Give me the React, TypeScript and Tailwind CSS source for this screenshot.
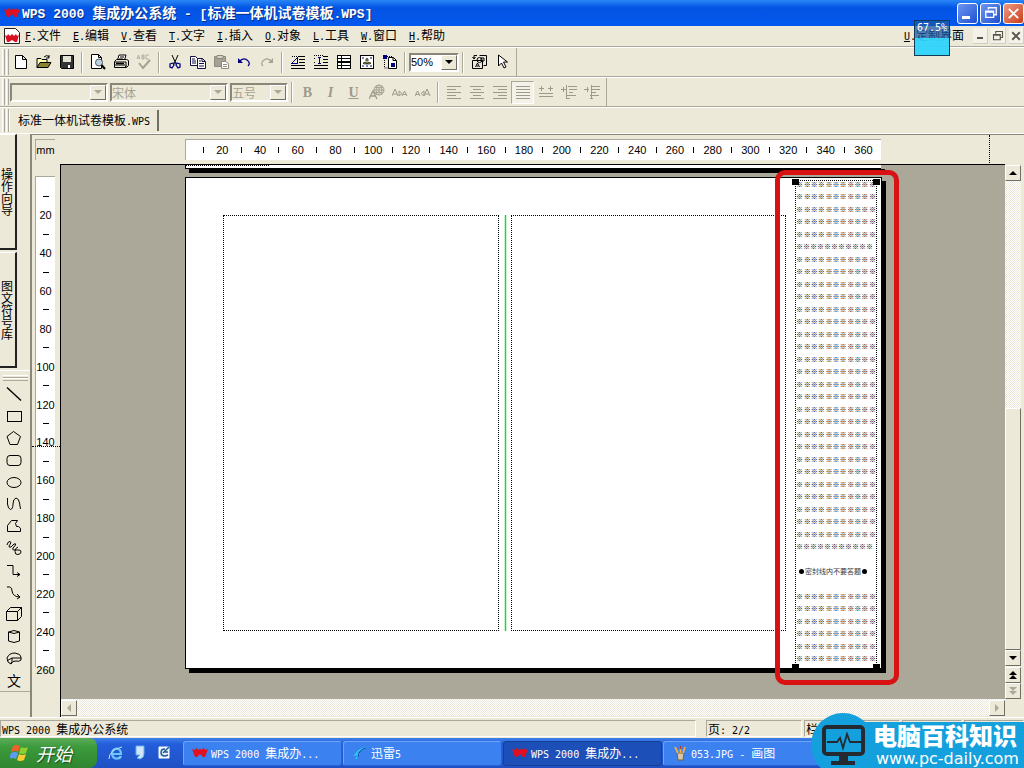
import React from 'react';
import clsx from 'clsx';

const menus = [
  ['F', '文件'],
  ['E', '编辑'],
  ['V', '查看'],
  ['T', '文字'],
  ['I', '插入'],
  ['O', '对象'],
  ['L', '工具'],
  ['W', '窗口'],
  ['H', '帮助'],
];

const horizontalMarks = Array.from({ length: 36 }, (_, i) => (i + 1) * 10);
const verticalMarks = Array.from({ length: 26 }, (_, i) => (i + 1) * 10);

const latin = "whitespace-pre text-[10px] font-['DejaVu_Sans_Mono',monospace]";
const latinLarge = "whitespace-pre text-[13px] font-['Liberation_Mono',monospace]";

// Latin runs are half as wide as the Chinese characters beside them
const Mixed: React.FC<{ text: string; large?: boolean }> = ({ text, large }) => (
  <>
    {text.split(/([\x20-\x7e]+)/).filter(Boolean).map((part, i) =>
      /^[\x20-\x7e]/.test(part) ? (
        <span key={i} className={large ? latinLarge : latin}>
          {part}
        </span>
      ) : (
        part
      )
    )}
  </>
);

const Icon: React.FC<{ children: React.ReactNode; size?: string }> = ({ children, size = 'w-4 h-4' }) => (
  <svg viewBox="0 0 16 16" className={clsx(size, 'shrink-0')} fill="none" stroke="currentColor" aria-hidden="true">
    {children}
  </svg>
);

const WpsMark = ({ size = 'w-4 h-4' }: { size?: string }) => (
  <svg viewBox="0 0 16 16" className={clsx(size, 'shrink-0')} aria-hidden="true">
    <path d="M0 4l3 1 1-2 3 2 1-2 1 2 3-2 1 2 3-1-3 8h-2l-3-3-3 3H3z" fill="#e01020" />
  </svg>
);

const icons: Record<string, React.ReactNode> = {
  新建: <path d="M2.500 1.500h7l4 4v9h-11zM9.500 1.500v4h4" fill="#fff" />,
  打开: (
    <>
      <path d="M1 13.500v-9h4l1 1h5v3" fill="#ffffb0" />
      <path d="M1 13.500l3-5h11l-3 5z" fill="#8a8430" />
      <path d="M8 3q3-3 5 0m0-2v3h-3" />
    </>
  ),
  保存: (
    <>
      <path d="M1.500 1.500h13v13h-12l-1-1z" fill="#333" />
      <path d="M4 2h8v6H4z" fill="#e4e4d4" stroke="none" />
      <path d="M9 11h2v3H9z" fill="#fff" stroke="none" />
    </>
  ),
  打印预览: (
    <>
      <path d="M1.500 .5h7l3 3v11h-10zM8.500 .5v3h3" fill="#fff" />
      <circle cx="9" cy="8.500" r="3.500" fill="#b9d4e4" stroke="#555" />
      <path d="M11.500 11l3.500 4" strokeWidth="2" />
    </>
  ),
  打印: (
    <>
      <path d="M4.500 6l1.500-5h7l-1.500 5" fill="#fff" />
      <path d="M7 3h4M6 5h4M1.500 7.500l2-2h10l2 1v5l-2 2h-12z" />
      <path d="M2 8h11v5M2 11h10M3.500 13.500h8l2-2" />
      <path d="M3 9.500h8" strokeWidth="1.500" />
    </>
  ),
  拼写检查: (
    <g stroke="#a5a293">
      <path d="M1 5l1.500-4L4 5M1.500 4h2M6 1v4h2V1zM6 3h2M13 1h-3v4h3" strokeWidth=".8" />
      <path d="M3 9l4 5 7-8" strokeWidth="2" />
    </g>
  ),
  剪切: (
    <g>
      <path d="M5 1l4 9M11 1L7 10" />
      <path d="M6 9l-3 1v3l2 1 2-3zM10 9l3 1v3l-2 1-2-3z" stroke="#000080" strokeWidth="1.300" />
    </g>
  ),
  复制: (
    <g stroke="#101040">
      <path d="M.5 2.500h5l2 2v7h-7z" fill="#fff" />
      <path d="M7.500 4.500h5l3 3v7h-8zM12 4.500v3h3M2 5h3M2 7h4M2 9h4M9 7h2M9 9.500h5M9 12h5" fill="#fff" />
    </g>
  ),
  粘贴: (
    <g stroke="#8e8b7c">
      <path d="M1.500 2.500h11v10h-11z" fill="#a5a293" />
      <path d="M4 1.500h6v3H4z" fill="#d8d5c6" />
      <path d="M8.500 7.500h4l3 2v5h-7zM10 10.500h4M10 12.500h4" fill="#fff" />
    </g>
  ),
  撤消: (
    <g stroke="#000080">
      <path d="M3 8q4-5 8-2 4 3 1 6" strokeWidth="1.300" />
      <path d="M2 4v5h5z" fill="#000080" stroke="none" />
    </g>
  ),
  恢复: (
    <g stroke="#a5a293">
      <path d="M13 8q-4-5-8-2-4 3-1 6" strokeWidth="1.200" />
      <path d="M14 4v5H9z" fill="#a5a293" stroke="none" />
    </g>
  ),
  横排文字: (
    <g shapeRendering="crispEdges">
      <path d="M1 2.500h14M9 5.500h6M9 8.500h6M1 11.500h14M1 14.500h14" />
      <path d="M1 2.500h7" stroke="#ece9d8" strokeDasharray="1 1" />
      <path d="M1.500 9.500l6-6v6z" stroke="#000080" />
    </g>
  ),
  竖排文字: (
    <g shapeRendering="crispEdges">
      <path d="M10 2.500h5M10 5.500h5M10 8.500h5M1 11.500h14M1 14.500h14" />
      <path d="M1 1.500h9M1 4.500h2M1 8.500h2" strokeDasharray="1 1" />
      <path d="M5 3.500h3M6.500 3.500v6M5 9.500h3" stroke="#000080" />
    </g>
  ),
  表格: (
    <g shapeRendering="crispEdges">
      <path d="M1.500 1.500h13v13h-13z" fill="#fff" />
      <path d="M1.500 4.500h13M1.500 8h13M1.500 11.500h13M5.500 1.500v13" strokeWidth="1.200" />
    </g>
  ),
  图片: (
    <>
      <path d="M1.500 1.500h13v13h-13z" fill="#fff" shapeRendering="crispEdges" />
      <path d="M8 4l1.500 2L8 7.500 6.500 6zM4 9l3-1 1 2H5zM12 9L9 8l-1 2h3z" fill="#94863d" strokeWidth=".6" />
      <path d="M3 4h2M11 4h2M3 12h2M11 12h2M7 12h2" stroke="#000080" />
    </>
  ),
  图文框: (
    <>
      <path d="M6.500 3.500h5l3 3v8h-8zM11 3.500v3h3" fill="#fff" />
      <path d="M1 1h4v4H1zM9 9h4v4H9z" fill="#000080" stroke="none" />
      <path d="M5 2.500h5M2.500 6v8h4" strokeDasharray="1 1" />
    </>
  ),
  查找: (
    <>
      <path d="M8.500 1.500h7v10h-3M1.500 6.500h10v8h-10z" fill="#ece9d8" />
      <path d="M4.500 13l2-4 2 4M5.500 12h2M3 5l-1.500-2M3 5l1.500-2M3 5V1.500h3M10 4h3v3h-3z" />
      <circle cx="8.500" cy="6" r="2.500" />
    </>
  ),
  选择: <path d="M4.500 1v11l3-3 2.500 5 2-1-2.500-5h4z" fill="#fff" />,
};

const grey = 'text-[#9d9a8b]';

const formatIcons: Record<string, React.ReactNode> = {
  颜色: (
    <g strokeWidth=".9">
      <circle cx="10" cy="6" r="5" />
      <path d="M5 6h10M10 1v10M6 3q4 2 8 0M6 9q4-2 8 0M8 1.500q-2 5 0 9M12 1.500q2 5 0 9" />
      <path d="M0 15l4-8 4 8M2 12h4" strokeWidth="1.300" />
    </g>
  ),
  放大字: <path d="M0 12l3-7 3 7M1 10h4M7 7v5l3-2.500zM10 12l2.500-5 2.500 5M11 10.500h3" />,
  缩小字: <path d="M0 12l2.500-5L5 12M1 10.500h3M9 7v5L6 9.500zM9 12l3-7 3 7M10 10h4" />,
};

const alignIcons: Record<string, string> = {
  左对齐: 'M1 2.500h14M1 5.500h9M1 8.500h14M1 11.500h9M1 14.500h14',
  居中: 'M1 2.500h14M4 5.500h8M1 8.500h14M4 11.500h8M1 14.500h14',
  右对齐: 'M1 2.500h14M6 5.500h9M1 8.500h14M6 11.500h9M1 14.500h14',
  两端对齐: 'M1 2.500h14M1 5.500h14M1 8.500h14M1 11.500h14M1 14.500h14',
  分散对齐: 'M1 4.500h5M3.500 2v5M10 4.500h5M12.500 2v5M1 9.500h14M1 12.500h14',
  减少缩进: 'M7 2.500h9M0 5.500h5M2.500 3v5M8 5.500h8M8 8.500h4M6 11.500h9M6 14.500h3M5.500 1v14',
  增加缩进: 'M7 2.500h9M0 5.500h5M3.500 3v5M8 5.500h8M8 8.500h4M6 11.500h9M6 14.500h3M7.500 1v14',
};

const shapes: Record<string, React.ReactNode> = {
  直线: <path d="M1 1.500l14 13" strokeWidth="1.400" />,
  矩形: <path d="M1.500 3.500h14v10h-14z" shapeRendering="crispEdges" />,
  多边形: <path d="M7.500 1.500l7 5-3 8H4l-3-8z" />,
  圆角矩形: <rect x="1" y="3.500" width="14" height="10" rx="3" />,
  椭圆: <ellipse cx="8" cy="8.500" rx="7" ry="5" />,
  曲线: <path d="M1.500 2v6q.5 5 3 5.500Q7 13 7 8t3-6q3 .5 3.500 5l1 6" />,
  任意多边形: <path d="M1.500 13.500v-6l4-5h6l-2 3 1 3h2q3 1 2 5z" />,
  自由曲线: <path d="M1 5q1-4 3-3.500T3 6q0 2 2 1l3-3q2-1 1.500 1L7 8q-1 2 1 2h5q2 0 2 2t-3 2.500-3-3T12 7" />,
  折线箭头: <path d="M1 3.500h6v9h7m-3-2l3 2-3 2" />,
  曲线箭头: <path d="M1 3q5-1 5 4 1 6 8 6m-3-3l3 3-3 2" />,
  立方体: <path d="M.5 5.500h11v9H.5zM.5 5.500l4-4h11l-4 4m4-4v9l-4 4" />,
  圆柱: <path d="M2.500 4v9q5.500 3 11 0V4q-5.500-3-11 0 5.500 3 11 0" />,
  扇形: <path d="M1 8q2-5 8-5 6 1 6 4v3q-2 2-5 1l-3 .5L5 14q-4-1-4-6M6 8h9M6 8l-4.500 2.500M6 8v3.500L4.500 14" />,
};

const ToolButton: React.FC<{ name: string; children: React.ReactNode; pressed?: boolean }> = ({ name, children, pressed }) => (
  <button
    title={name}
    aria-label={name}
    className={clsx(
      'w-[23px] h-[23px] shrink-0 flex items-center justify-center',
      pressed && 'border border-r-white border-b-white border-[#aca899] bg-[#f3f1e8]'
    )}
  >
    {children}
  </button>
);

const Separator = () => (
  <span className="w-2 h-[21px] shrink-0 flex justify-center">
    <span className="w-[2px] h-full bg-[#aca899] border-r border-white" />
  </span>
);

const Grip = () => (
  <span className="flex gap-px w-[9px] h-full py-px pl-[2px] shrink-0">
    <span className="w-[3px] border-l border-r border-l-white border-r-[#aca899]" />
    <span className="w-[3px] border-l border-r border-l-white border-r-[#aca899]" />
  </span>
);

const Arrow: React.FC<{ d: string; color?: string }> = ({ d, color = '#000' }) => (
  <svg viewBox="0 0 8 8" className="w-2 h-2" aria-hidden="true">
    <path d={d} fill={color} />
  </svg>
);

const DOWN = 'M0 2h8L4 6z';
const UP = 'M0 6h8L4 2z';

interface ComboProps {
  label: string;
  value: string;
  className: string;
  disabled?: boolean;
}

const Combo: React.FC<ComboProps> = ({ label, value, className, disabled }) => (
  <label
    className={clsx(
      'flex shrink-0 h-[19px] border-2 border-t-[#8a8778] border-l-[#8a8778] border-r-white border-b-white',
      disabled ? 'bg-[#ece9d8]' : 'bg-white',
      className
    )}
  >
    <select
      aria-label={label}
      disabled={disabled}
      className={clsx(
        'appearance-none flex-1 min-w-0 leading-[15px] outline-none',
        disabled ? 'text-[12px] text-[#a5a293]' : "text-[11px] text-black font-['Liberation_Sans',sans-serif]"
      )}
    >
      <option>{value}</option>
    </select>
    <span className="w-4 flex items-center justify-center bg-[#ece9d8] border border-t-white border-l-white border-r-[#716f64] border-b-[#716f64]">
      <Arrow d={DOWN} color={disabled ? '#aca899' : '#000'} />
    </span>
  </label>
);

const TitleBar = () => (
  <header className="h-[26px] shrink-0 flex items-center px-1 bg-linear-to-b from-[#2a86f5] via-[#0454e4] via-30% to-[#0358ee] text-white">
    <WpsMark />
    <h1 className="ml-[2px] flex-1 text-[14px] leading-[18px] font-bold [text-shadow:1px_1px_#0a2a80]">
      <Mixed large text="WPS 2000 集成办公系统 - [标准一体机试卷模板.WPS]" />
    </h1>
    <div className="flex gap-[2px] -mr-1">
      <button aria-label="最小化" className="w-[21px] h-[21px] rounded-[3px] border border-white bg-linear-to-br from-[#6f95f2] to-[#1e4fd0] flex items-end p-1">
        <span className="w-2 h-[3px] bg-white" />
      </button>
      <button aria-label="还原" className="w-[21px] h-[21px] rounded-[3px] border border-white bg-linear-to-br from-[#6f95f2] to-[#1e4fd0] flex items-center justify-center">
        <Icon size="w-[14px] h-[14px]">
          <path d="M5 4V2h9v8h-3M2 6h9v7H2zM2 7h9" strokeWidth="1.500" />
        </Icon>
      </button>
      <button aria-label="关闭" className="w-[21px] h-[21px] rounded-[3px] border border-white bg-linear-to-br from-[#ee9a80] to-[#c83a14] flex items-center justify-center">
        <Icon size="w-[15px] h-[15px]">
          <path d="M3 3l10 10M13 3L3 13" strokeWidth="2" />
        </Icon>
      </button>
    </div>
  </header>
);

const MenuBar = () => (
  <nav className="relative h-[21px] shrink-0 flex items-center pl-1 border-b border-[#aca899] text-[12px]">
    <svg viewBox="0 0 16 16" className="w-4 h-4 mr-[5px] shrink-0" aria-hidden="true">
      <path d="M.5.500h11l4 4v11H.5z" fill="#fff" stroke="#222" />
      <path d="M1 7l2 1 1-2 2 2 2-2 2 2 2-2 1 2 2-1-2 7h-2l-3-2-3 2H3z" fill="#d91020" />
    </svg>
    <div className="flex flex-1">
      {menus.map(([key, label]) => (
        <button key={key} className="w-12 shrink-0 text-left leading-[18px]">
          <span className={clsx('underline', latin)}>{key}</span>
          <span className={latin}>.</span>
          {label}
        </button>
      ))}
    </div>
    <button className="mr-[9px] leading-[18px]">
      <span className={clsx('underline', latin)}>U</span>
      <span className={latin}>.</span>
      定制界面
    </button>
    <div className="flex gap-[3px] text-[#55534a]">
      <button aria-label="最小化文档" className="w-[15px] h-4 bg-[#f3f1e8] border-r border-b border-[#d2cfc0] flex items-end justify-center pb-1">
        <span className="w-[6px] h-[2px] bg-[#55534a]" />
      </button>
      <button aria-label="还原文档" className="w-[15px] h-4 bg-[#f3f1e8] border-r border-b border-[#d2cfc0] flex items-center justify-center">
        <Icon size="w-3 h-3">
          <path d="M5 5V2h9v8h-3M2 6h9v7H2zM2 7h9" strokeWidth="1.500" />
        </Icon>
      </button>
      <button aria-label="关闭文档" className="w-[15px] h-4 bg-[#f3f1e8] border-r border-b border-[#d2cfc0] flex items-center justify-center">
        <Icon size="w-3 h-3">
          <path d="M3 3l10 10M13 3L3 13" strokeWidth="2.500" />
        </Icon>
      </button>
    </div>
    {/* floating progress meter */}
    <div className="absolute right-[74px] -top-[6px] w-9 h-9 border border-[#123a58] flex flex-col">
      <span className={clsx('h-[17px] bg-[#1b5aa8]/75 text-white leading-[14px] text-center', latin)}>67.5%</span>
      <span className="flex-1 bg-[#2fd3fb]/95" />
    </div>
  </nav>
);

const StandardToolbar = () => (
  <div className="h-[30px] shrink-0 flex border-t border-b border-t-white border-b-[#aca899]">
    <div className="flex items-center h-full pr-[3px] border-r border-[#aca899]">
      <Grip />
      {['新建', '打开', '保存'].map((n) => <ToolButton key={n} name={n}><Icon>{icons[n]}</Icon></ToolButton>)}
      <Separator />
      {['打印预览', '打印', '拼写检查'].map((n) => <ToolButton key={n} name={n}><Icon>{icons[n]}</Icon></ToolButton>)}
      <Separator />
      {['剪切', '复制', '粘贴', '撤消', '恢复'].map((n) => <ToolButton key={n} name={n}><Icon>{icons[n]}</Icon></ToolButton>)}
      <Separator />
      {['横排文字', '竖排文字', '表格', '图片', '图文框'].map((n) => <ToolButton key={n} name={n}><Icon>{icons[n]}</Icon></ToolButton>)}
      <Separator />
      <Combo label="显示比例" value="50%" className="w-[50px]" />
      <Separator />
      {['查找', '选择'].map((n) => <ToolButton key={n} name={n}><Icon>{icons[n]}</Icon></ToolButton>)}
    </div>
  </div>
);

const FormatToolbar = () => (
  <div className="h-[30px] shrink-0 flex border-t border-b border-t-white border-b-[#aca899]">
    <div className="flex items-center h-full pr-[3px] border-r border-[#aca899]">
      <Grip />
      <div className="flex gap-[2px] ml-px">
        <Combo disabled label="样式" value="" className="w-[98px]" />
        <Combo disabled label="字体" value="宋体" className="w-[118px]" />
        <Combo disabled label="字号" value="五号" className="w-[58px]" />
      </div>
      <Separator />
      <ToolButton name="加粗"><b className="font-['Liberation_Serif',serif] text-[14px] text-[#9d9a8b]">B</b></ToolButton>
      <ToolButton name="倾斜"><b className="font-['Liberation_Serif',serif] text-[14px] italic text-[#9d9a8b]">I</b></ToolButton>
      <ToolButton name="下划线"><b className="font-['Liberation_Serif',serif] text-[14px] underline text-[#9d9a8b]">U</b></ToolButton>
      {Object.keys(formatIcons).map((n) => (
        <ToolButton key={n} name={n}>
          <span className={grey}><Icon>{formatIcons[n]}</Icon></span>
        </ToolButton>
      ))}
      <Separator />
      {Object.keys(alignIcons).map((n) => (
        <ToolButton key={n} name={n} pressed={n === '两端对齐'}>
          <span className={grey}>
            <Icon><path d={alignIcons[n]} shapeRendering="crispEdges" /></Icon>
          </span>
        </ToolButton>
      ))}
    </div>
  </div>
);

const SideTab: React.FC<{ label: string }> = ({ label }) => (
  <button className="w-[17px] h-[116px] shrink-0 pl-px pr-[2px] flex items-center justify-center border-t border-r-2 border-b-2 border-t-white border-r-[#222] border-b-[#222]">
    <span className="w-3 text-[12px] leading-3 break-all">{label}</span>
  </button>
);

const Sidebar = () => (
  <aside className="w-[30px] shrink-0 flex flex-col gap-[2px] bg-[#ece9d8]">
    <SideTab label="操作向导" />
    <SideTab label="图文符号库" />
    <div className="border-t border-white pt-1 flex flex-col items-center border-b border-b-[#aca899]">
      <span className="w-[25px] h-[3px] border-t border-b border-t-white border-b-[#aca899]" />
      <span className="w-[25px] h-[3px] mb-[2px] border-t border-b border-t-white border-b-[#aca899]" />
      {Object.keys(shapes).map((n) => (
        <button key={n} title={n} aria-label={n} className="w-full h-[22px] flex items-center justify-center pr-[2px]">
          <Icon>{shapes[n]}</Icon>
        </button>
      ))}
      <button className="w-full h-[22px] text-[14px] leading-[20px] pr-[2px]">文</button>
    </div>
  </aside>
);

const HorizontalRuler = () => (
  <div className="relative flex items-start pt-1 pl-[125px]">
    <div className="w-[696px] h-[21px] shrink-0 bg-white border-t border-l border-[#aca899] px-2 flex items-center">
      {horizontalMarks.map((mm) => (
        <span key={mm} className="flex-1 w-0 flex justify-center">
          {mm % 20 ? <i className="w-px h-[6px] bg-black" /> : mm}
        </span>
      ))}
    </div>
    <span className="absolute right-[34px] top-0 h-[28px] border-l border-dotted border-black" />
  </div>
);

const VerticalRuler = () => (
  <div className="relative pt-3 pl-[3px]">
    <div className="w-[20px] h-[491px] pt-[10px] bg-white border-t border-l border-[#aca899]">
      <div className="h-[492px] flex flex-col">
        {verticalMarks.map((mm) => (
          <span key={mm} className="flex-1 h-0 flex items-center justify-center">
            {mm % 20 ? <i className="w-[6px] h-px bg-black" /> : mm}
          </span>
        ))}
      </div>
    </div>
    <span className="absolute left-0 top-[282px] w-full border-t border-dotted border-black" />
  </div>
);

const SealRow: React.FC<{ narrow?: boolean }> = ({ narrow }) => (
  <div className={clsx('flex-1 h-0 flex items-start font-bold', !narrow && 'justify-between')}>
    {(narrow ? ['※※※※※※※※※※※'] : ['※', '※※※', '※※※', '※※※', '※']).map((s, i) => (
      <span key={i}>{s}</span>
    ))}
  </div>
);

const Handle: React.FC<{ className: string }> = ({ className }) => (
  <span className={clsx('absolute w-[7px] h-[6px] bg-black', className)} />
);

// The sealing strip printed along the edge of the paper
const SealStrip = () => (
  <div className="absolute left-[609px] top-[2px] w-[82px] h-[489px] border border-dotted border-black flex flex-col text-[7px] leading-[7px] text-black">
    {Array.from({ length: 30 }, (_, i) => <SealRow key={i} narrow={i === 5 || i === 29} />)}
    <span className="flex-1" />
    <div className="flex-1 h-0 flex items-start pl-[3px]">
      <i className="w-[5px] h-[5px] mt-px rounded-full bg-black" />
      <span className="mx-px opacity-80">密封线内不要答题</span>
      <i className="w-[5px] h-[5px] mt-px rounded-full bg-black" />
    </div>
    <span className="flex-1" />
    {Array.from({ length: 6 }, (_, i) => <SealRow key={i} />)}
    <Handle className="-left-1 -top-[2px]" />
    <Handle className="-right-1 -top-[2px]" />
    <Handle className="-left-1 -bottom-[2px]" />
    <Handle className="-right-1 -bottom-[2px]" />
  </div>
);

const Paper = () => (
  <div className="flex-1 min-w-0 overflow-hidden bg-[#aca899] border-t border-black pl-[124px]">
    <div className="w-[696px] h-1 bg-white border-l border-b border-black shadow-[4px_4px_0_#000]">
      <div className="w-[83px] border-t border-dotted border-black" />
    </div>
    <div className="relative mt-2 w-[697px] h-[492px] bg-white border border-black shadow-[4px_4px_0_#000]">
      <div className="flex pt-[37px] pl-[37px] h-[453px]">
        <div className="w-[276px] border border-dotted border-black" />
        <div className="w-3 pl-[5px] flex"><span className="w-[3px] bg-[#3cc04a] border-x border-[#c8f5cc]" /></div>
        <div className="w-[275px] border border-dotted border-black" />
      </div>
      <SealStrip />
      <div className="absolute left-[589px] -top-[8px] w-[124px] h-[515px] rounded-[10px] border-5 border-[#d81212]" />
    </div>
  </div>
);

const scrollButton = 'shrink-0 w-4 h-4 flex items-center justify-center bg-[#ece9d8] border border-t-white border-l-white border-r-[#716f64] border-b-[#716f64]';
const track = 'bg-[#f5f3ea] bg-[repeating-conic-gradient(#fff_0_25%,#ebe8da_0_50%)] bg-size-[2px_2px]';

const VerticalScroll = () => (
  <div className={clsx('w-4 shrink-0 flex flex-col mt-px', track)}>
    <button aria-label="向上滚动" className={scrollButton}><Arrow d={UP} /></button>
    <span className="flex-1" />
    <span className="h-[242px] bg-[#ece9d8] border border-t-white border-l-white border-r-[#716f64] border-b-[#716f64]" />
    <button aria-label="向下滚动" className={scrollButton}><Arrow d={DOWN} /></button>
    <button aria-label="上一页" className={clsx(scrollButton, 'mt-px')}><Arrow d="M0 4h8L4 0zM0 8h8L4 4z" /></button>
    <button aria-label="下一页" className={scrollButton}><Arrow d="M0 0h8L4 4zM0 4h8L4 8z" color="#aca899" /></button>
  </div>
);

const Workspace = () => (
  <main className="flex-1 min-w-0 flex flex-col border-l-2 border-t border-l-[#8a8778] border-t-[#8a8778] text-[11px] leading-[12px] font-['Liberation_Sans',sans-serif]">
    <div className="h-[29px] shrink-0 flex">
      <div className="w-7 shrink-0 pt-1 pl-[3px]">
        <span className="w-[20px] h-[21px] flex items-center justify-center border-t border-l border-[#aca899]">mm</span>
      </div>
      <div className="flex-1"><HorizontalRuler /></div>
    </div>
    <div className="flex flex-1 min-h-0">
      <div className="w-7 shrink-0"><VerticalRuler /></div>
      <div className="flex-1 min-w-0 flex flex-col border-l border-black">
        <div className="flex flex-1 min-h-0 pr-[3px] font-['Noto_Sans_CJK_SC',sans-serif]">
          <Paper />
          <VerticalScroll />
        </div>
        <div className="flex h-[18px] shrink-0 pr-[19px]">
          <div className={clsx('flex flex-1 justify-between items-end h-[17px]', track)}>
            <button aria-label="向左滚动" className={scrollButton}><Arrow d="M6 0v8L2 4z" color="#aca899" /></button>
            <button aria-label="向右滚动" className={scrollButton}><Arrow d="M2 0v8l4-4z" color="#aca899" /></button>
          </div>
        </div>
      </div>
    </div>
  </main>
);

const statusCell = 'h-[17px] border-t border-l border-b border-r border-t-[#aca899] border-l-[#aca899] border-b-white border-r-white leading-[15px] pl-px';

const StatusBar = () => (
  <footer className="h-[21px] shrink-0 flex items-end pb-px border-t border-white text-[12px]">
    <div className={clsx(statusCell, 'flex-1')}><Mixed text="WPS 2000 集成办公系统" /></div>
    <div className={clsx(statusCell, 'w-[96px] ml-[10px]')}><Mixed text="页: 2/2" /></div>
    <div className={clsx(statusCell, 'w-[96px] ml-[2px]')}>栏</div>
    <div className={clsx(statusCell, 'w-[60px] ml-[2px]')} />
    <div className={clsx(statusCell, 'w-[60px] ml-[2px]')} />
  </footer>
);

const TaskButton: React.FC<{ text: string; active?: boolean; children: React.ReactNode }> = ({ text, active, children }) => (
  <button
    className={clsx(
      'w-[159px] h-[25px] shrink-0 flex items-center gap-[3px] pl-2 rounded-[3px] text-left text-white text-[12px] border',
      active ? 'bg-[#1c4fb8] border-[#163f98]' : 'bg-[#3c81f0] border-t-[#6ba4f8] border-l-[#6ba4f8] border-r-[#2a62d0] border-b-[#2a62d0]'
    )}
  >
    {children}
    <span><Mixed text={text} /></span>
  </button>
);

const TaskBar = () => (
  <div className="h-[30px] shrink-0 flex items-center bg-linear-to-b from-[#3f80ea] via-[#245edb] via-20% to-[#1f50c4]">
    <button className="w-[97px] h-full shrink-0 flex items-center gap-[6px] pl-[10px] rounded-r-lg bg-linear-to-b from-[#5dac5a] via-[#3c9a3c] via-30% to-[#2f862f] text-white">
      <svg viewBox="0 0 20 18" className="w-5 h-[18px]" aria-hidden="true">
        <path d="M3 2q4-2 7 0L8 8q-3-2-7 0z" fill="#f0602c" />
        <path d="M11 3q3 2 7 0l-2 6q-4 2-7 0z" fill="#8fd030" />
        <path d="M1 9q4-2 7 0l-2 6q-3-2-7 0z" fill="#5c9cf4" />
        <path d="M9 10q3 2 7 0l-2 6q-4 2-7 0z" fill="#fccc30" />
      </svg>
      <span className="text-[18px] leading-6 italic [text-shadow:1px_1px_1px_#1a4a1a]">开始</span>
    </button>
    <div className="flex items-center gap-2 pl-[11px] pr-[10px]">
      <button aria-label="Internet Explorer">
        <Icon>
          <path d="M4 9h9q0-5-4.500-5.500Q4 4 4 9q1 5 5 4.500 3 0 4-2.500" stroke="#6fc4fa" strokeWidth="2.200" />
          <path d="M1 14Q1 5 14 2" stroke="#b9e2fc" />
        </Icon>
      </button>
      <button aria-label="电子邮件">
        <Icon>
          <path d="M4 1h8v8q0 4-4 5l-3-1 3-3H4z" fill="#cfe6fb" stroke="#6caeea" />
        </Icon>
      </button>
      <button aria-label="显示桌面">
        <Icon>
          <path d="M3 2h10v11H3z" fill="#e9f2fa" stroke="#fff" />
          <path d="M9 4q-4 0-4 3.500T9 11l3-1M7 8l6-6M9 7h3" stroke="#1c5a9a" strokeWidth="1.500" />
        </Icon>
      </button>
    </div>
    <div className="flex gap-px ml-px">
      <TaskButton text="WPS 2000 集成办..."><WpsMark /></TaskButton>
      <TaskButton text="迅雷5">
        <Icon>
          <path d="M14 3Q8 3 3 10l4-1-3 5" stroke="#2bd0e8" strokeWidth="1.300" />
          <path d="M14 3Q7 4 6 12" stroke="#114ba8" />
        </Icon>
      </TaskButton>
      <TaskButton active text="WPS 2000 集成办..."><WpsMark /></TaskButton>
      <TaskButton text="053.JPG - 画图">
        <Icon>
          <path d="M5 8h7l-1 7H6z" fill="#d8c8a8" stroke="#776040" />
          <path d="M6 8L3 2M8.500 8V1M11 8l2-6" stroke="#f0b040" strokeWidth="1.800" />
          <path d="M8.500 4V1" stroke="#c03030" strokeWidth="1.800" />
        </Icon>
      </TaskButton>
    </div>
  </div>
);

const SiteBadge = () => (
  <div className="absolute right-0 bottom-0 w-[213px] h-[55px] overflow-hidden flex items-end">
    <div className="absolute left-0 top-0 w-16 h-16 rounded-full bg-[#149fdd]" />
    <div className="absolute left-8 right-0 bottom-0 h-[46px] bg-[#149fdd]" />
    <svg viewBox="0 0 44 42" className="absolute left-[11px] top-[12px] w-11 h-[42px]" fill="none" aria-hidden="true">
      <rect x="2" y="2" width="39" height="27" rx="3" stroke="#252a30" strokeWidth="4" />
      <path d="M17 30h9v6h7v4H9v-4h8z" fill="#252a30" />
      <path d="M5 17h10l3-4 3 10 4-14 3 8h11" stroke="#252a30" strokeWidth="1.800" />
    </svg>
    <div className="relative ml-[62px] text-white whitespace-nowrap">
      <p className="text-[24px] leading-[28px] font-black">电脑百科知识</p>
      <a href="#" className="block pl-[3px] text-[16px] leading-[19px] font-['DejaVu_Sans',sans-serif]">www.pc-daily.com</a>
    </div>
  </div>
);

export default function App() {
  return (
    <div className="relative h-screen w-full overflow-hidden flex flex-col bg-[#ece9d8] text-black font-['Noto_Sans_CJK_SC',sans-serif]">
      <TitleBar />
      <MenuBar />
      <StandardToolbar />
      <FormatToolbar />
      <div className="h-[26px] shrink-0 flex border-t border-white">
        <Grip />
        <button className="my-[2px] pl-[8px] pr-[7px] text-[12px] leading-[20px] border-l border-r-2 border-l-white border-r-[#716f64]">
          <Mixed text="标准一体机试卷模板.WPS" />
        </button>
      </div>
      <div className="flex flex-1 min-h-0 border-t border-white">
        <Sidebar />
        <Workspace />
      </div>
      <StatusBar />
      <TaskBar />
      <SiteBadge />
    </div>
  );
}
